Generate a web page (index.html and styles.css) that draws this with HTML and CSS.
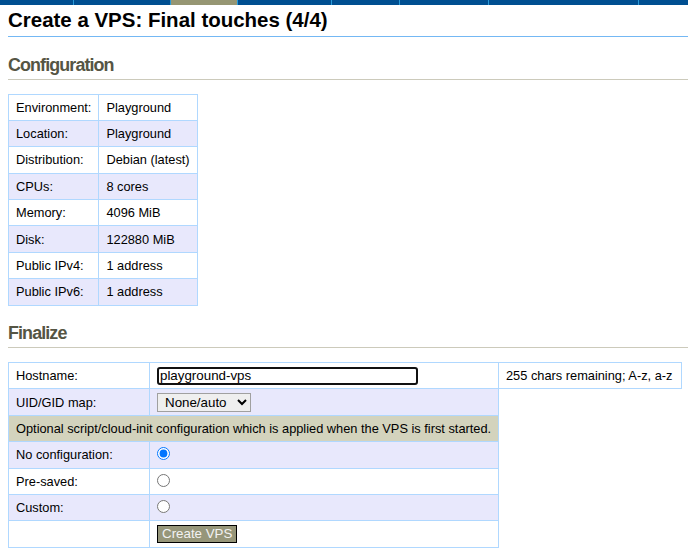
FILE: index.html
```html
<!DOCTYPE html>
<html lang="en">
<head>
  <meta charset="UTF-8">
  <title>Create a VPS: Final touches (4/4)</title>
  <link rel="stylesheet" href="styles.css">
</head>
<body>
  <!-- menu bar (scrolled, only the bottom edge shows) -->
  <div class="menubar">
    <span class="menu-item" style="width: 73px"></span>
    <span class="menu-item" style="width: 96px"></span>
    <span class="menu-item active" style="width: 66px"></span>
    <span class="menu-item" style="width: 93px"></span>
    <span class="menu-item" style="width: 67px"></span>
    <span class="menu-item" style="width: 88px"></span>
    <span class="menu-item" style="width: 149px"></span>
    <span class="menu-item last"></span>
  </div>

  <div class="content">
    <h1>Create a VPS: Final touches (4/4)</h1>

    <h2>Configuration</h2>
    <table class="cdetail">
      <tr><th>Environment:</th><td>Playground</td></tr>
      <tr><th>Location:</th><td>Playground</td></tr>
      <tr><th>Distribution:</th><td>Debian (latest)</td></tr>
      <tr><th>CPUs:</th><td>8 cores</td></tr>
      <tr><th>Memory:</th><td>4096 MiB</td></tr>
      <tr><th>Disk:</th><td>122880 MiB</td></tr>
      <tr><th>Public IPv4:</th><td>1 address</td></tr>
      <tr><th>Public IPv6:</th><td>1 address</td></tr>
    </table>

    <h2>Finalize</h2>
    <form>
      <table class="cdetail finalize">
        <colgroup>
          <col class="col-label">
          <col class="col-value">
          <col class="col-hint">
        </colgroup>
        <tr>
          <th>Hostname:</th>
          <td><input type="text" class="hostname" name="hostname" value="playground-vps"></td>
          <td>255 chars remaining; A-z, a-z</td>
        </tr>
        <tr>
          <th>UID/GID map:</th>
          <td>
            <select name="user_namespace_map" class="uidmap">
              <option>None/auto</option>
            </select>
          </td>
        </tr>
        <tr>
          <td class="note" colspan="2">Optional script/cloud-init configuration which is applied when the VPS is first started.</td>
        </tr>
        <tr>
          <th>No configuration:</th>
          <td><input type="radio" name="script" value="none" checked></td>
        </tr>
        <tr>
          <th>Pre-saved:</th>
          <td><input type="radio" name="script" value="saved"></td>
        </tr>
        <tr>
          <th>Custom:</th>
          <td><input type="radio" name="script" value="custom"></td>
        </tr>
        <tr>
          <th></th>
          <td><button type="submit" class="btn">Create VPS</button></td>
        </tr>
      </table>
    </form>
  </div>
</body>
</html>
```

FILE: styles.css
```css
body {
  font-family: 'Liberation Sans', Arial, sans-serif;
  font-size: 12.8px;
  color: #000;
  background: #fff;
  margin: 0;
  padding: 0;
}

.menubar {
  display: flex;
  height: 5px;
  background: #004f91;
}

.menu-item {
  flex: none;
  height: 5px;
  border-right: 1px solid #2a9ad8;
}

.menu-item.active {
  background: #969673;
}

.menu-item.last {
  flex: 1;
  border-right: none;
}

.content {
  padding: 0 0 0 8px;
}

h1 {
  font-size: 1.6em;
  font-weight: bold;
  margin: 3px 0 0;
  padding-bottom: 5px;
  line-height: 23px;
  border-bottom: 1px solid #74b8f4;
}

h2 {
  font-size: 1.4em;
  font-weight: bold;
  letter-spacing: -0.9px;
  color: #555544;
  margin: 17.5px 0 14px;
  padding-bottom: 3px;
  line-height: 21px;
  border-bottom: 1px solid #cccabb;
}

form {
  margin: 0;
}

.cdetail {
  border-collapse: collapse;
}

.cdetail th,
.cdetail td {
  border: 1px solid #b0d8ff;
  padding: 5.2px 7px;
  line-height: 15px;
  text-align: left;
  font-weight: normal;
  vertical-align: top;
  white-space: nowrap;
}

.cdetail tr:nth-child(even) th,
.cdetail tr:nth-child(even) td {
  background: #e8e8fc;
}

.finalize {
  table-layout: fixed;
  width: 673px;
}

.col-label {
  width: 141px;
}

.col-value {
  width: 349px;
}

.col-hint {
  width: 183px;
}

.finalize tr:nth-child(odd) th,
.finalize tr:nth-child(odd) td {
  background: #fff;
}

.finalize tr:nth-child(3) td.note {
  background: #d3d3bd;
}

.hostname {
  box-sizing: border-box;
  width: 261px;
  height: 18px;
  margin: -1.5px 0;
  padding: 0 1px;
  border: 2px solid #111;
  border-radius: 3px;
  font-family: 'Liberation Sans', Arial, sans-serif;
  font-size: 13.33px;
  vertical-align: top;
}

.uidmap {
  box-sizing: border-box;
  width: 94px;
  height: 19px;
  margin: -2px 0;
  padding: 0 3px;
  border: 1px solid #a0a0a0;
  border-radius: 0;
  background: #efefef;
  font-family: 'Liberation Sans', Arial, sans-serif;
  font-size: 13.33px;
  vertical-align: top;
}

input[type="radio"] {
  width: 13px;
  height: 13px;
  margin: 0;
  vertical-align: top;
}

.btn {
  box-sizing: border-box;
  height: 18px;
  margin: -1.5px 0;
  padding: 0 4px;
  border: 1px solid #000;
  border-radius: 0;
  background: #96967a;
  color: #f2f2f2;
  font-family: 'Liberation Sans', Arial, sans-serif;
  font-size: 13.33px;
  line-height: 16px;
  vertical-align: top;
  cursor: pointer;
}
```
